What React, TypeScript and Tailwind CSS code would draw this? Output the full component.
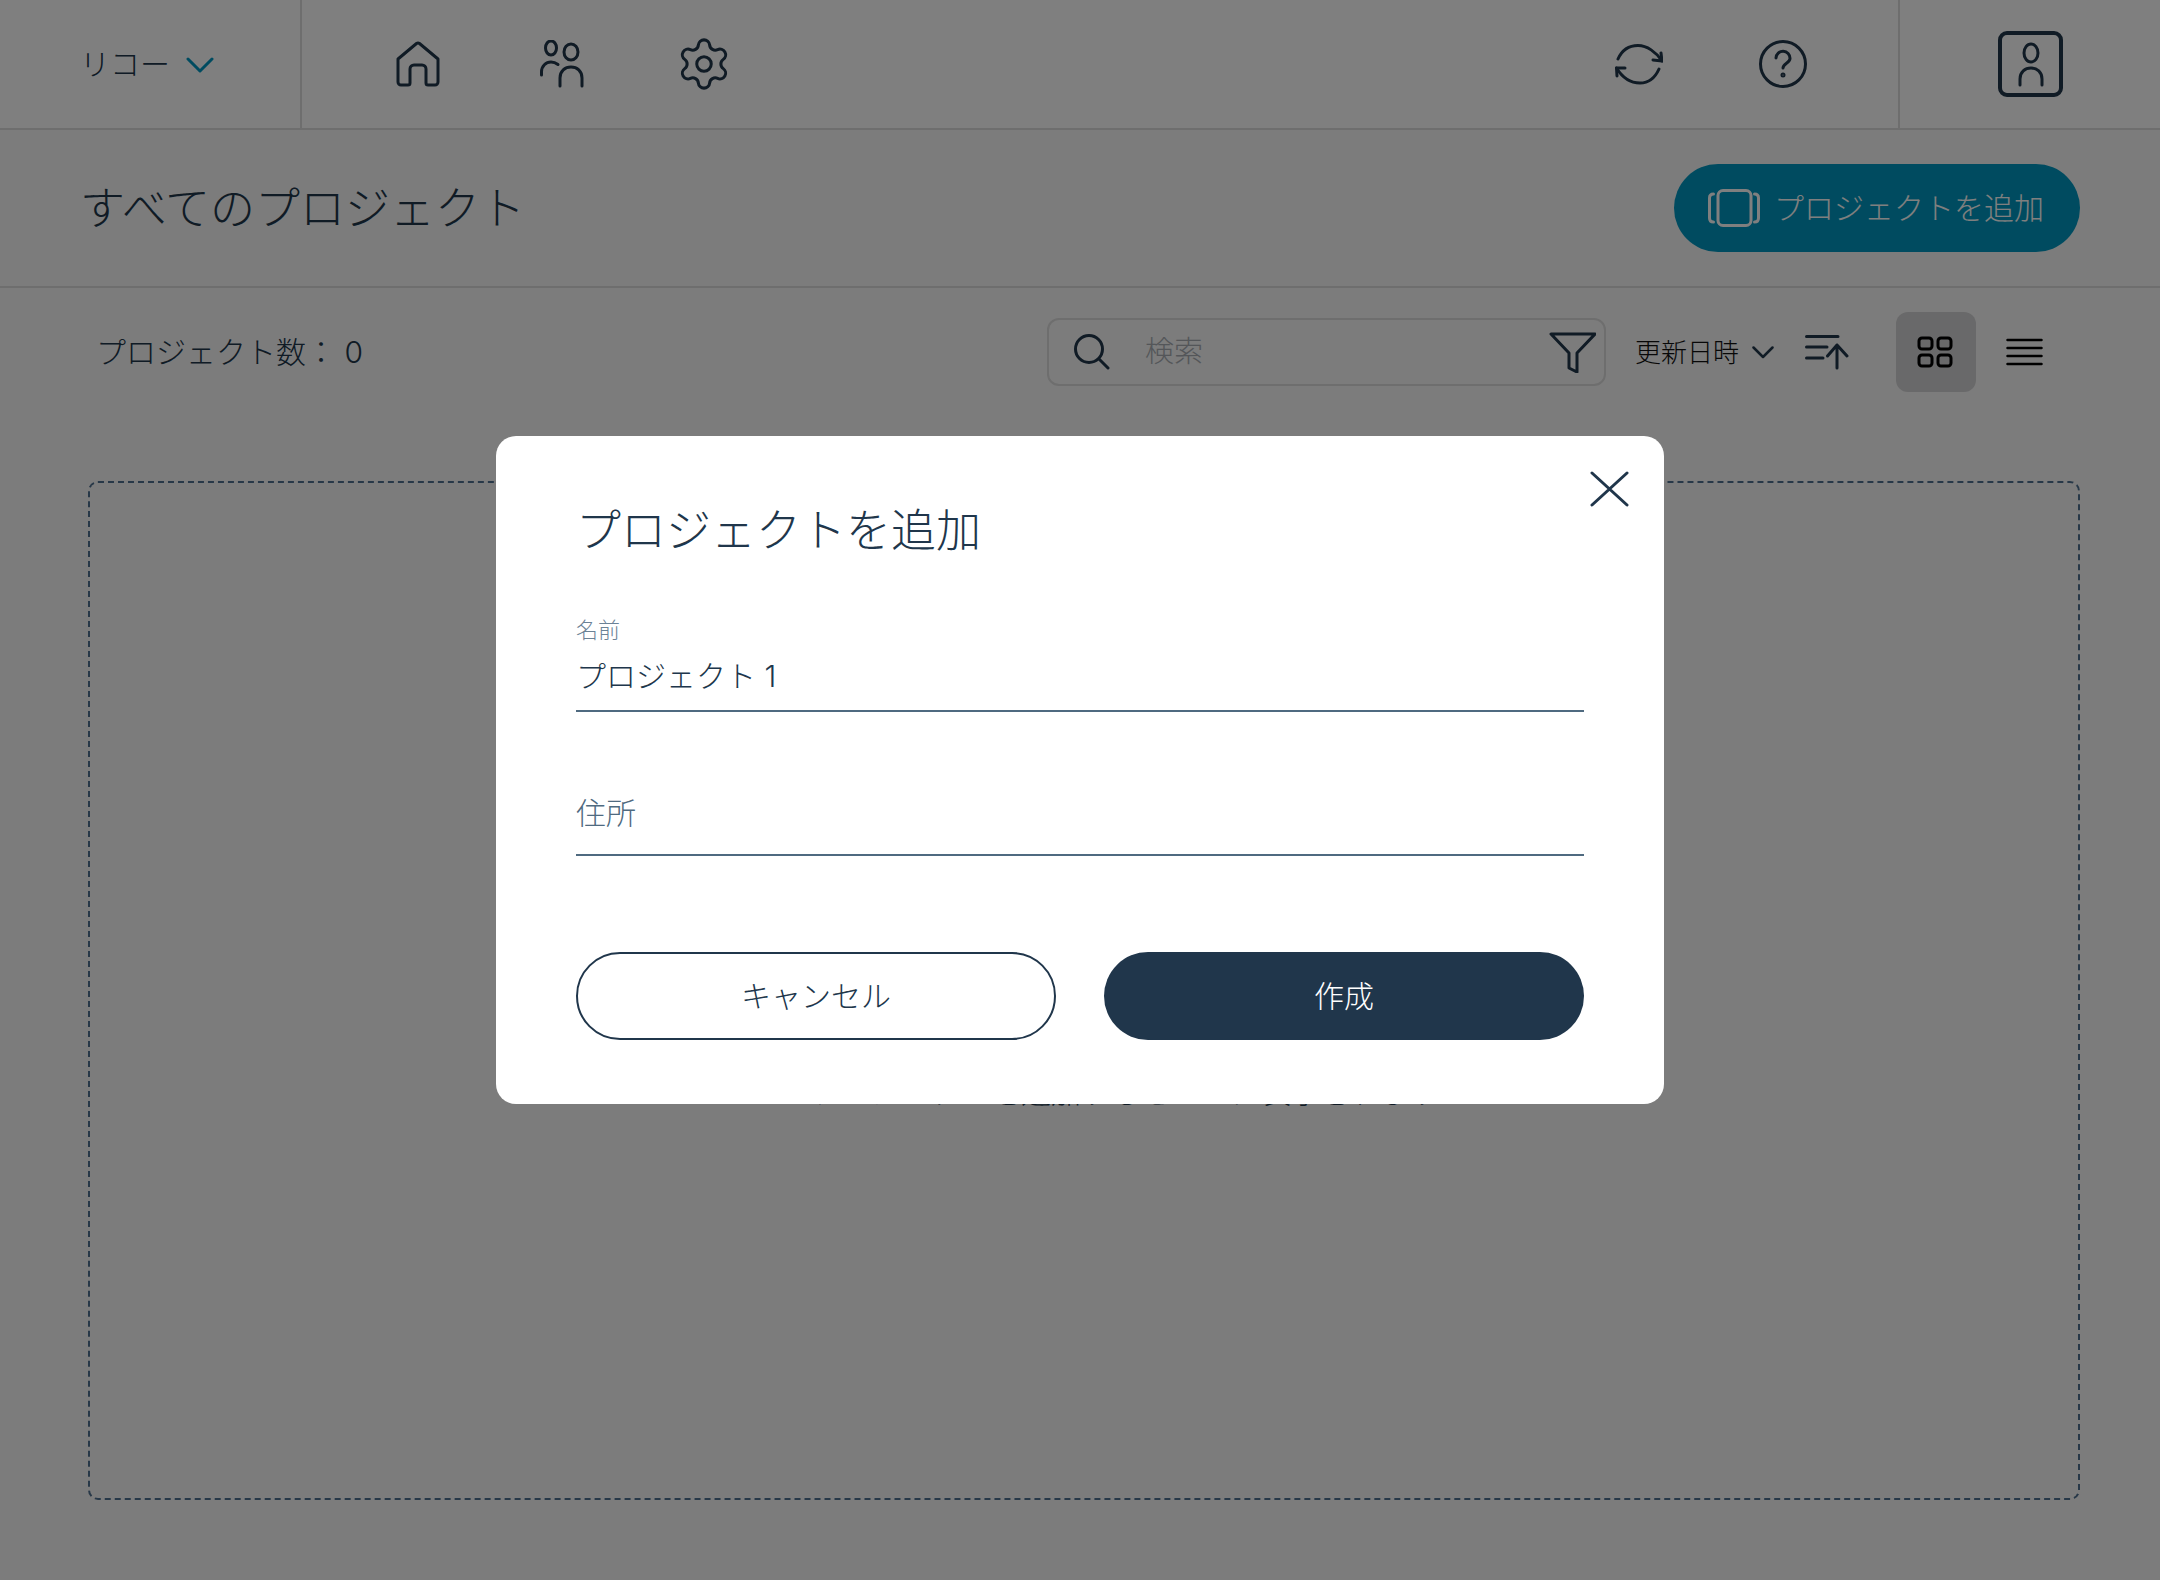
import { Settings } from "lucide-react";

const font = "font-['Inter','Noto_Sans_CJK_JP',sans-serif]";

function Stroke({ w, h, className, children }: { w: number; h: number; className?: string; children: React.ReactNode }) {
  return (
    <svg
      width={w}
      height={h}
      viewBox={`0 0 ${w} ${h}`}
      fill="none"
      stroke="currentColor"
      strokeWidth={3}
      strokeLinecap="round"
      strokeLinejoin="round"
      className={className}
    >
      {children}
    </svg>
  );
}

function Header() {
  return (
    <header className="flex h-[130px] border-b-2 border-[#dcdcdc] bg-white text-[#20364b]">
      <div className="flex w-[302px] shrink-0 items-center border-r-2 border-[#dcdcdc] pl-[80px]">
        <span className="text-[30px] font-light">リコー</span>
        <Stroke w={28} h={16} className="ml-[16px] mt-[2px] text-[#0097c0]">
          <path d="M2 2 L14 14 L26 2" />
        </Stroke>
      </div>

      <nav className="flex items-center pl-[94px]">
        <Stroke w={44} h={46}>
          <path d="M2 18 L20.5 2.5 a2.5 2.5 0 0 1 3 0 L42 18 V41 a3 3 0 0 1-3 3 H32 a2 2 0 0 1-2-2 V28 a4 4 0 0 0 -4-4 H18 a4 4 0 0 0 -4 4 V42 a2 2 0 0 1 -2 2 H5 a3 3 0 0 1 -3-3 Z" />
        </Stroke>
        <Stroke w={45} h={48} className="ml-[100px]">
          <ellipse cx="11" cy="8" rx="5.5" ry="7" />
          <ellipse cx="31" cy="12" rx="7" ry="8" />
          <path d="M20 46 V38 C20 31 25 27 31 27 C37 27 42 31 42 38 V46" />
          <path d="M1.5 35 V32 C1.5 26 6 22 11 22 C14 22 16 23 18 24.5" />
        </Stroke>
        <Settings size={58} strokeWidth={1.25} className="ml-[90px]" />
      </nav>

      <div className="ml-auto flex items-center">
        <Stroke w={48} h={41}>
          <path d="M3 15 C7 6 14 1.5 23 1.5 C32 1.5 41 8 47 17" />
          <path d="M46 9 L47 17 L38 16" />
          <path d="M44 25 C40 34 33 39 25 39 C15 39 7 33 1.5 24" />
          <path d="M2 32 L1.5 24 L10 24" />
        </Stroke>
        <Stroke w={50} h={48} className="ml-[95px] mr-[90px]">
          <circle cx="25" cy="24" r="22.5" />
          <path d="M18 18 a7 7 0 0 1 14 0.5 c0 4.5 -7 5 -7 9.5" />
          <circle cx="25" cy="35" r="1" />
        </Stroke>
      </div>

      <div className="flex w-[262px] shrink-0 items-center border-l-2 border-[#dcdcdc] pl-[98px]">
        <Stroke w={65} h={66}>
          <rect x="2" y="2" width="61" height="62" rx="7" strokeWidth={4} />
          <ellipse cx="33" cy="22" rx="7" ry="9" />
          <path d="M22 54 V48 C22 41 27 37 33 37 C39 37 44 41 44 48 V54" />
        </Stroke>
      </div>
    </header>
  );
}

function TitleBar() {
  return (
    <div className="flex h-[158px] items-center justify-between border-b-2 border-[#dcdcdc] pl-[80px] pr-[80px] text-[#20364b]">
      <h1 className="text-[45px] font-light leading-none">すべてのプロジェクト</h1>
      <button className="flex h-[88px] w-[406px] items-center rounded-full bg-[#0097c0] pl-[34px] text-[30px] font-light text-white">
        <Stroke w={52} h={38} className="mr-[14px]">
          <rect x="10" y="1.5" width="33" height="35" rx="5" />
          <path d="M5.5 5 C3 5 1.5 6.5 1.5 9 V29 C1.5 31.5 3 33 5.5 33" />
          <path d="M46.5 5 C49 5 50.5 6.5 50.5 9 V29 C50.5 31.5 49 33 46.5 33" />
        </Stroke>
        プロジェクトを追加
      </button>
    </div>
  );
}

function Toolbar() {
  return (
    <div className="flex items-center pl-[96px] pt-[24px] text-[#20364b]">
      <span className="text-[30px] font-light">プロジェクト数： 0</span>

      <div className="ml-auto flex h-[68px] w-[559px] items-center rounded-[12px] border-2 border-[#dcdcdc] pl-[25px] pr-[8px]">
        <Stroke w={36} h={36}>
          <circle cx="15" cy="15" r="13.5" />
          <path d="M25 25 L34 34" />
        </Stroke>
        <span className="ml-[35px] text-[29px] font-light text-[#a8adb3]">検索</span>
        <Stroke w={47} h={41} className="ml-auto">
          <path d="M2 2 H46 L28 21 V40 L20 36 V21 Z" />
        </Stroke>
      </div>

      <span className="ml-[29px] text-[26px] font-light text-[#111]">更新日時</span>
      <Stroke w={22} h={13} className="ml-[13px]">
        <path d="M1.5 1.5 L11 11 L20.5 1.5" strokeWidth={2.5} />
      </Stroke>
      <Stroke w={44} h={36} className="ml-[31px]">
        <path d="M1.5 2.5 H33 M1.5 13 H22 M1.5 24 H18 M32 34 V11 M22.5 22 L32 11 L42 22" />
      </Stroke>
      <div className="ml-[47px] flex h-[80px] w-[80px] items-center justify-center rounded-[12px] bg-[#d2d2d4] text-black">
        <Stroke w={36} h={32} className="mr-[2px]">
          <rect x="2" y="2" width="13" height="11" rx="3" />
          <rect x="21" y="2" width="13" height="11" rx="3" />
          <rect x="2" y="19" width="13" height="11" rx="3" />
          <rect x="21" y="19" width="13" height="11" rx="3" />
        </Stroke>
      </div>
      <Stroke w={37} h={28} className="ml-[30px] mr-[117px] text-black">
        <path d="M1.5 2 H35.5 M1.5 10 H35.5 M1.5 18 H35.5 M1.5 26 H35.5" strokeWidth={2.5} />
      </Stroke>
    </div>
  );
}

function AddProjectModal() {
  return (
    <div className="absolute inset-0 flex justify-center bg-black/50 pt-[436px]">
      <div className="h-[668px] w-[1168px] rounded-[20px] bg-white px-[80px] pt-[72px] text-[#20364b]">
        <div className="relative">
          <h2 className="text-[45px] font-light leading-none">プロジェクトを追加</h2>
          <Stroke w={39} h={36} className="absolute right-[-45px] top-[-37px]">
            <path d="M2 2 L37 34 M37 2 L2 34" />
          </Stroke>
        </div>

        <div className="mt-[66px] border-b-2 border-[#4f6a80] pb-[14px]">
          <div className="text-[22px] font-light leading-none text-[#6b8296]">名前</div>
          <div className="mt-[15px] text-[30px] font-light leading-[40px]">プロジェクト 1</div>
        </div>
        <div className="mt-[81px] border-b-2 border-[#4f6a80] pb-[21px]">
          <div className="text-[30px] font-light leading-[40px] text-[#4f6a80]">住所</div>
        </div>

        <div className="mt-[96px] flex gap-[48px]">
          <button className="h-[88px] w-[480px] rounded-full border-2 border-[#20364b] text-[30px] font-light">キャンセル</button>
          <button className="h-[88px] w-[480px] rounded-full bg-[#20364b] text-[30px] font-light text-white">作成</button>
        </div>
      </div>
    </div>
  );
}

export default function App() {
  return (
    <div className={`relative h-[1580px] w-[2160px] overflow-hidden bg-[#f8f8f8] ${font}`}>
      <Header />
      <TitleBar />
      <Toolbar />

      {/* Empty state, almost entirely covered by the modal */}
      <div className="ml-[88px] mr-[80px] mt-[89px] flex h-[1019px] items-start justify-center rounded-[10px] border-2 border-dashed border-[#4f7090] pl-[84px]">
        <p className="mt-[589px] text-[30px] font-light leading-[40px] text-[#20364b]">
          プロジェクトを追加するとここに表示されます
        </p>
      </div>

      <AddProjectModal />
    </div>
  );
}
